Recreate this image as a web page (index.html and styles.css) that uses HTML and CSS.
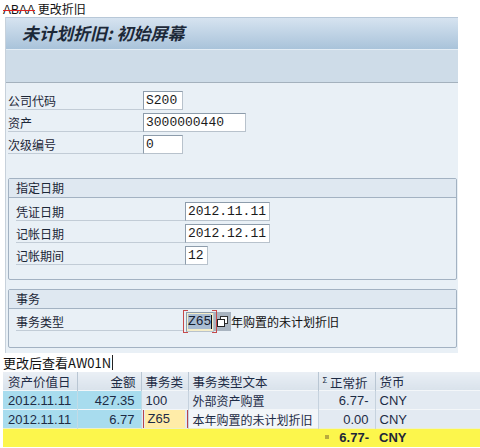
FILE: index.html
```html
<!DOCTYPE html>
<html lang="zh">
<head>
    <meta charset="UTF-8">
    <title>未计划折旧: 初始屏幕</title>
    <link rel="stylesheet" href="styles.css">
</head>
<body>
    <div class="caption"><span class="typo">ABAA</span> 更改折旧</div>

    <div class="sapwin">
        <div class="titlebar"><h1>未计划折旧: 初始屏幕</h1></div>
        <div class="toolbar"></div>

        <div class="screen">
            <div class="row">
                <span class="label">公司代码</span>
                <span class="field w4">S200</span>
            </div>
            <div class="row">
                <span class="label">资产</span>
                <span class="field w12">3000000440</span>
            </div>
            <div class="row">
                <span class="label">次级编号</span>
                <span class="field w4">0</span>
            </div>

            <div class="group first">
                <div class="group-title">指定日期</div>
                <div class="group-body">
                    <div class="row">
                        <span class="label">凭证日期</span>
                        <span class="field w10">2012.11.11</span>
                    </div>
                    <div class="row">
                        <span class="label">记帐日期</span>
                        <span class="field w10">2012.12.11</span>
                    </div>
                    <div class="row">
                        <span class="label">记帐期间</span>
                        <span class="field w2">12</span>
                    </div>
                </div>
            </div>

            <div class="group">
                <div class="group-title">事务</div>
                <div class="group-body">
                    <div class="row">
                        <span class="label">事务类型</span>
                        <span class="focus">
                            <span class="field active"><span class="selected">Z65</span><span class="caret"></span></span>
                        </span>
                        <span class="f4-help">
                            <svg width="11" height="11" viewBox="0 0 11 11">
                                <rect x="3.5" y="0.5" width="7" height="7" fill="#fff" stroke="#333"/>
                                <rect x="0.5" y="3.5" width="7" height="7" fill="#fff" stroke="#222"/>
                            </svg>
                        </span>
                        <span class="descr">年购置的未计划折旧</span>
                    </div>
                </div>
            </div>
        </div>
    </div>

    <div class="note">更改后查看AW01N<span class="cursor"></span></div>

    <div class="grid-wrap">
        <table class="grid">
            <thead>
                <tr>
                    <th class="c1">资产价值日</th>
                    <th class="c2 num">金额</th>
                    <th class="c3">事务类</th>
                    <th class="c4">事务类型文本</th>
                    <th class="c5"><sup>Σ</sup> 正常折</th>
                    <th class="c6">货币</th>
                </tr>
            </thead>
            <tbody>
                <tr>
                    <td class="key">2012.11.11</td>
                    <td class="key num">427.35</td>
                    <td>100</td>
                    <td class="text">外部资产购置</td>
                    <td class="num">6.77-</td>
                    <td>CNY</td>
                </tr>
                <tr>
                    <td class="key">2012.11.11</td>
                    <td class="key num">6.77</td>
                    <td class="hot"><span class="focus-cell">Z65</span></td>
                    <td class="text light">本年购置的未计划折旧</td>
                    <td class="num">0.00</td>
                    <td>CNY</td>
                </tr>
                <tr class="total">
                    <td></td>
                    <td></td>
                    <td></td>
                    <td></td>
                    <td class="num"><span class="dot"></span>6.77-</td>
                    <td>CNY</td>
                </tr>
            </tbody>
        </table>
    </div>
</body>
</html>
```

FILE: styles.css
```css
* {
    margin: 0;
    padding: 0;
    box-sizing: border-box;
}

body {
    background: #fff;
    font-family: "Noto Sans CJK SC", "Liberation Sans", sans-serif;
    color: #1b2636;
    width: 480px;
    height: 448px;
    overflow: hidden;
}

.caption {
    height: 17px;
    padding: 1px 0 0 3px;
    font-size: 12px;
    line-height: 15px;
    color: #111;
}

.typo {
    font-family: "Liberation Sans", sans-serif;
    text-decoration: line-through;
    text-decoration-color: #d22;
}

/* SAP GUI window */
.sapwin {
    margin-left: 5px;
    width: 453px;
    border-left: 1px solid #c7d1db;
}

.titlebar {
    height: 32px;
    background: linear-gradient(#d6e3f0, #a9c3da);
    border-top: 1px solid #b8c8d8;
    padding-left: 16px;
}

.titlebar h1 {
    font-size: 17px;
    font-style: italic;
    font-weight: bold;
    line-height: 30px;
    color: #1c2838;
}

.toolbar {
    height: 34px;
    background: #cedce8;
    border-top: 1px solid #e4edf5;
    border-bottom: 1px solid #a4b1bd;
}

.screen {
    background: #e9f0f6;
    padding: 7px 1px 5px 2px;
}

.row {
    height: 22px;
    padding: 1px 0 2px;
    display: flex;
    align-items: stretch;
}

.label {
    flex: 0 0 135px;
    display: flex;
    align-items: center;
    font-size: 12px;
    border-bottom: 1px solid #c2ccd6;
    color: #1b2636;
}

.field {
    height: 19px;
    background: #fff;
    border: 1px solid #8d9cab;
    border-right-color: #b8c2cc;
    border-bottom-color: #b8c2cc;
    font-family: "Liberation Mono", monospace;
    font-size: 13px;
    line-height: 17px;
    padding-left: 2px;
    color: #1a1a1a;
}

.w2 { width: 23px; }
.w4 { width: 40px; }
.w10 { width: 85px; }
.w12 { width: 103px; }

/* group boxes */
.group {
    margin-top: 22px;
    border: 1px solid #a3b2c2;
    border-radius: 2px;
}

.group + .group {
    margin-top: 9px;
}

.group-title {
    height: 19px;
    background: #dfe8f1;
    border-bottom: 1px solid #a3b2c2;
    padding-left: 7px;
    font-size: 12px;
    line-height: 18px;
}

.group-body {
    padding: 3px 0 12px 7px;
}

.group + .group .group-body {
    padding: 2px 0 14px 7px;
}

.group-body .label {
    flex-basis: 169px;
}

.group + .group .label {
    flex-basis: 167px;
}

/* focused input with red corner marks */
.focus {
    position: relative;
    padding: 0 3px;
    display: flex;
    align-items: center;
}

.focus::before,
.focus::after {
    content: "";
    position: absolute;
    top: -2px;
    bottom: -2px;
    width: 4px;
    border: 1px solid #c64a4a;
}

.focus::before {
    left: 0;
    border-right: none;
}

.focus::after {
    right: 0;
    border-left: none;
}

.field.active {
    width: 28px;
    height: 20px;
    background: #f5edc8;
    padding-left: 1px;
    display: flex;
    align-items: center;
}

.selected {
    background: #a9bcd2;
    color: #152030;
    line-height: 15px;
}

.caret {
    width: 1px;
    height: 14px;
    background: #111;
}

.f4-help {
    width: 17px;
    height: 19px;
    margin-left: -3px;
    background: #a9b4c0;
    display: flex;
    align-items: center;
    justify-content: center;
}

.descr {
    font-size: 12px;
    display: flex;
    align-items: center;
    color: #111;
}

.note {
    height: 19px;
    padding-left: 3px;
    font-size: 13px;
    line-height: 17px;
    color: #111;
    display: flex;
    align-items: center;
}

.cursor {
    width: 1px;
    height: 15px;
    background: #222;
    margin-left: 1px;
}

/* result list */
.grid-wrap {
    padding-left: 3px;
    width: 480px;
    overflow: hidden;
}

.grid {
    border-collapse: collapse;
    table-layout: fixed;
    width: 520px;
    font-family: "Liberation Sans", "Noto Sans CJK SC", sans-serif;
    font-size: 13px;
    color: #1d2b45;
}

.grid th {
    height: 17px;
    font-weight: normal;
    text-align: left;
    padding: 0 4px;
    background: linear-gradient(#eaeff5, #d9e2eb);
    border-right: 1px solid #b9c6d3;
    font-family: "Noto Sans CJK SC", sans-serif;
    font-size: 12.5px;
    line-height: 15px;
    color: #1d2b45;
    white-space: nowrap;
    overflow: hidden;
}

.grid th sup {
    font-size: 8px;
    vertical-align: 5px;
}

.c1 { width: 74px; }
.c2 { width: 64px; }
.c3 { width: 47px; }
.c4 { width: 130px; }
.c5 { width: 57px; }
.c6 { width: 148px; }

.grid th.c1 { padding-left: 5px; }
.grid th.c2 { padding-right: 5px; }

.grid td {
    height: 19px;
    padding: 0 4px;
    background: #e3eaf2;
    border-right: 1px solid #c6d2de;
    border-top: 1px solid #f3f6f9;
    line-height: 17px;
    white-space: nowrap;
    overflow: hidden;
}

.grid td:first-child {
    padding-left: 5px;
}

.grid .num {
    text-align: right;
    padding-right: 6px;
}

.grid td.key {
    background: #a8dcee;
    border-right-color: #c2dbe6;
}

.grid td.text {
    font-family: "Noto Sans CJK SC", sans-serif;
    font-size: 12px;
    padding-left: 4px;
    padding-right: 2px;
}

.grid td.light {
    background: #f3f6f9;
}

.grid td.hot {
    padding: 0 2px;
    background: #e3eaf2;
}

.focus-cell {
    position: relative;
    display: block;
    height: 18px;
    background: #ffeca8;
    line-height: 18px;
    padding-left: 3px;
    margin: 0 1px;
}

.focus-cell::before,
.focus-cell::after {
    content: "";
    position: absolute;
    top: -1px;
    bottom: -1px;
    width: 4px;
    border: 1px solid #b8444a;
}

.focus-cell::before {
    left: -2px;
    border-right: none;
}

.focus-cell::after {
    right: -3px;
    border-left: none;
}

.grid tr.total td {
    height: 18px;
    background: #fcf64c;
    border-right: none;
    border-top: 1px solid #eef0c8;
    font-weight: bold;
    color: #1d2638;
}

.dot {
    display: inline-block;
    width: 4px;
    height: 4px;
    background: #b9aa3c;
    margin-right: 10px;
    vertical-align: 3px;
}
```
